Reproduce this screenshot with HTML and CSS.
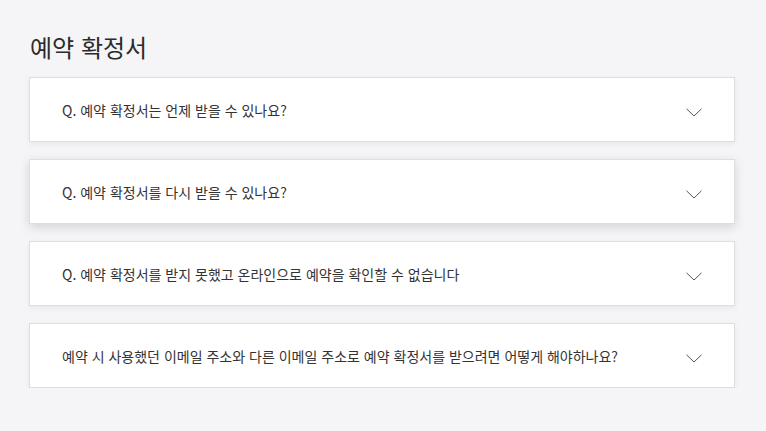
FILE: index.html
```html
<!DOCTYPE html>
<html lang="ko">
<head>
<meta charset="utf-8">
<link rel="stylesheet" href="styles.css">
</head>
<body>
<main class="page">
  <h1 class="title">예약 확정서</h1>
  <div class="faq-list">
    <div class="faq-item">
      <span class="faq-q">Q. 예약 확정서는 언제 받을 수 있나요?</span>
      <svg class="chev" width="16" height="9" viewBox="0 0 16 9"><path d="M0.5 0.8 L8 8 L15.5 0.8" fill="none" stroke="#555" stroke-width="1"/></svg>
    </div>
    <div class="faq-item hover">
      <span class="faq-q">Q. 예약 확정서를 다시 받을 수 있나요?</span>
      <svg class="chev" width="16" height="9" viewBox="0 0 16 9"><path d="M0.5 0.8 L8 8 L15.5 0.8" fill="none" stroke="#555" stroke-width="1"/></svg>
    </div>
    <div class="faq-item">
      <span class="faq-q">Q. 예약 확정서를 받지 못했고 온라인으로 예약을 확인할 수 없습니다</span>
      <svg class="chev" width="16" height="9" viewBox="0 0 16 9"><path d="M0.5 0.8 L8 8 L15.5 0.8" fill="none" stroke="#555" stroke-width="1"/></svg>
    </div>
    <div class="faq-item">
      <span class="faq-q">예약 시 사용했던 이메일 주소와 다른 이메일 주소로 예약 확정서를 받으려면 어떻게 해야하나요?</span>
      <svg class="chev" width="16" height="9" viewBox="0 0 16 9"><path d="M0.5 0.8 L8 8 L15.5 0.8" fill="none" stroke="#555" stroke-width="1"/></svg>
    </div>
  </div>
</main>
</body>
</html>
```

FILE: styles.css
```css
html, body {
  margin: 0;
  padding: 0;
  background: #f5f5f7;
  font-family: "Noto Sans CJK KR", "Noto Sans", sans-serif;
  color: #333;
}
.page {
  padding: 30px 31px 0 29px;
}
.title {
  margin: 0 0 13px 1px;
  font-size: 24px;
  font-weight: 400;
  line-height: 34px;
  color: #2b2b2b;
}
.faq-list {
  display: flex;
  flex-direction: column;
  gap: 17px;
}
.faq-item {
  height: 63px;
  background: #fff;
  border: 1px solid #dedede;
  box-shadow: 0 2px 6px rgba(0, 0, 0, 0.06);
  display: flex;
  align-items: center;
  justify-content: space-between;
  padding: 0 32px 0 32px;
}
.faq-item.hover {
  box-shadow: 0 3px 10px rgba(0, 0, 0, 0.14);
}
.faq-q {
  font-size: 14px;
  color: #333;
  letter-spacing: 0;
}
.chev {
  margin-top: 6px;
}
```
